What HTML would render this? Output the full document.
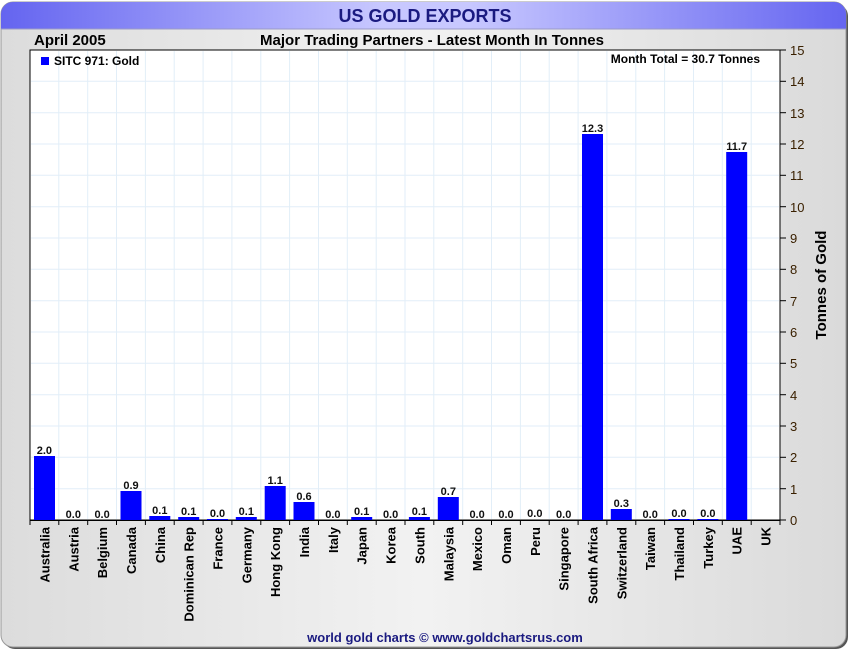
<!DOCTYPE html>
<html><head><style>
html,body{margin:0;padding:0;background:#fff;}
svg{display:block;font-family:"Liberation Sans",Arial,sans-serif;}
</style></head><body>
<svg width="850" height="650" xmlns="http://www.w3.org/2000/svg">
<defs>
<linearGradient id="tb" x1="0" x2="1" y1="0" y2="0">
<stop offset="0" stop-color="#6464f0"/><stop offset="0.45" stop-color="#c8c8ff"/><stop offset="0.55" stop-color="#c8c8ff"/><stop offset="1" stop-color="#6464f0"/>
</linearGradient>
<linearGradient id="bg" x1="0" x2="1" y1="0" y2="0">
<stop offset="0" stop-color="#dcdcdc"/><stop offset="0.5" stop-color="#f2f2f2"/><stop offset="1" stop-color="#dadada"/>
</linearGradient>
<clipPath id="cl"><rect x="1" y="2" width="845" height="645" rx="12"/></clipPath>
</defs>
<rect x="3" y="4" width="845" height="645" rx="12" fill="#555"/>
<rect x="1" y="2" width="845" height="645" rx="12" fill="url(#bg)" stroke="#999" stroke-width="1"/>
<g clip-path="url(#cl)"><rect x="0" y="0" width="850" height="29" fill="url(#tb)"/><line x1="0" y1="29" x2="850" y2="29" stroke="#9a9ac8"/></g>
<text x="425" y="22" text-anchor="middle" font-size="18" font-weight="bold" fill="#1a1a80">US GOLD EXPORTS</text>
<text x="34" y="45" font-size="15" font-weight="bold" fill="#000">April 2005</text>
<text x="432" y="45" text-anchor="middle" font-size="15" font-weight="bold" fill="#000">Major Trading Partners - Latest Month In Tonnes</text>
<rect x="30" y="50" width="750" height="470" fill="#fff" stroke="#000" stroke-width="1"/>
<g stroke="#e2eef8" stroke-width="1">
<line x1="31" y1="81.3" x2="779" y2="81.3"/><line x1="31" y1="112.7" x2="779" y2="112.7"/><line x1="31" y1="144" x2="779" y2="144"/><line x1="31" y1="175.3" x2="779" y2="175.3"/><line x1="31" y1="206.7" x2="779" y2="206.7"/><line x1="31" y1="238" x2="779" y2="238"/><line x1="31" y1="269.3" x2="779" y2="269.3"/><line x1="31" y1="300.7" x2="779" y2="300.7"/><line x1="31" y1="332" x2="779" y2="332"/><line x1="31" y1="363.3" x2="779" y2="363.3"/><line x1="31" y1="394.7" x2="779" y2="394.7"/><line x1="31" y1="426" x2="779" y2="426"/><line x1="31" y1="457.3" x2="779" y2="457.3"/><line x1="31" y1="488.7" x2="779" y2="488.7"/>
<line x1="58.8" y1="51" x2="58.8" y2="519"/><line x1="87.7" y1="51" x2="87.7" y2="519"/><line x1="116.5" y1="51" x2="116.5" y2="519"/><line x1="145.4" y1="51" x2="145.4" y2="519"/><line x1="174.2" y1="51" x2="174.2" y2="519"/><line x1="203.1" y1="51" x2="203.1" y2="519"/><line x1="231.9" y1="51" x2="231.9" y2="519"/><line x1="260.8" y1="51" x2="260.8" y2="519"/><line x1="289.6" y1="51" x2="289.6" y2="519"/><line x1="318.5" y1="51" x2="318.5" y2="519"/><line x1="347.3" y1="51" x2="347.3" y2="519"/><line x1="376.2" y1="51" x2="376.2" y2="519"/><line x1="405" y1="51" x2="405" y2="519"/><line x1="433.8" y1="51" x2="433.8" y2="519"/><line x1="462.7" y1="51" x2="462.7" y2="519"/><line x1="491.5" y1="51" x2="491.5" y2="519"/><line x1="520.4" y1="51" x2="520.4" y2="519"/><line x1="549.2" y1="51" x2="549.2" y2="519"/><line x1="578.1" y1="51" x2="578.1" y2="519"/><line x1="606.9" y1="51" x2="606.9" y2="519"/><line x1="635.8" y1="51" x2="635.8" y2="519"/><line x1="664.6" y1="51" x2="664.6" y2="519"/><line x1="693.5" y1="51" x2="693.5" y2="519"/><line x1="722.3" y1="51" x2="722.3" y2="519"/><line x1="751.2" y1="51" x2="751.2" y2="519"/>
</g>
<rect x="41" y="57" width="8" height="8" fill="#0000ff"/>
<text x="54" y="65" font-size="12" font-weight="bold" fill="#000">SITC 971: Gold</text>
<text x="760" y="63" text-anchor="end" font-size="12" font-weight="bold" fill="#000">Month Total = 30.7 Tonnes</text>
<g fill="#0000ff">
<rect x="34" y="456" width="21" height="64"/>
<rect x="120.5" y="491" width="21" height="29"/>
<rect x="149.3" y="516" width="21" height="4"/>
<rect x="178.2" y="517" width="21" height="3"/>
<rect x="207" y="519" width="21" height="1"/>
<rect x="235.8" y="517" width="21" height="3"/>
<rect x="264.7" y="486" width="21" height="34"/>
<rect x="293.5" y="502" width="21" height="18"/>
<rect x="351.2" y="517" width="21" height="3"/>
<rect x="408.9" y="517" width="21" height="3"/>
<rect x="437.8" y="497" width="21" height="23"/>
<rect x="582" y="134" width="21" height="386"/>
<rect x="610.8" y="509" width="21" height="11"/>
<rect x="668.5" y="519" width="21" height="1"/>
<rect x="697.4" y="519" width="21" height="1"/>
<rect x="726.2" y="152" width="21" height="368"/>
</g>
<g font-size="11" font-weight="bold" fill="#111" text-anchor="middle">
<text x="44.4" y="454">2.0</text><text x="73.3" y="518">0.0</text><text x="102.1" y="518">0.0</text><text x="131" y="489">0.9</text><text x="159.8" y="514">0.1</text><text x="188.7" y="515">0.1</text><text x="217.5" y="517">0.0</text><text x="246.3" y="515">0.1</text><text x="275.2" y="484">1.1</text><text x="304" y="500">0.6</text><text x="332.9" y="518">0.0</text><text x="361.7" y="515">0.1</text><text x="390.6" y="518">0.0</text><text x="419.4" y="515">0.1</text><text x="448.3" y="495">0.7</text><text x="477.1" y="518">0.0</text><text x="506" y="518">0.0</text><text x="534.8" y="517">0.0</text><text x="563.7" y="518">0.0</text><text x="592.5" y="132">12.3</text><text x="621.3" y="507">0.3</text><text x="650.2" y="518">0.0</text><text x="679" y="517">0.0</text><text x="707.9" y="517">0.0</text><text x="736.7" y="150">11.7</text>
</g>
<g stroke="#000" stroke-width="1">
<line x1="780" y1="50" x2="780" y2="521"/><line x1="30" y1="520.5" x2="780" y2="520.5"/>
<line x1="780" y1="50" x2="786" y2="50"/><line x1="780" y1="81.3" x2="786" y2="81.3"/><line x1="780" y1="112.7" x2="786" y2="112.7"/><line x1="780" y1="144" x2="786" y2="144"/><line x1="780" y1="175.3" x2="786" y2="175.3"/><line x1="780" y1="206.7" x2="786" y2="206.7"/><line x1="780" y1="238" x2="786" y2="238"/><line x1="780" y1="269.3" x2="786" y2="269.3"/><line x1="780" y1="300.7" x2="786" y2="300.7"/><line x1="780" y1="332" x2="786" y2="332"/><line x1="780" y1="363.3" x2="786" y2="363.3"/><line x1="780" y1="394.7" x2="786" y2="394.7"/><line x1="780" y1="426" x2="786" y2="426"/><line x1="780" y1="457.3" x2="786" y2="457.3"/><line x1="780" y1="488.7" x2="786" y2="488.7"/><line x1="780" y1="520" x2="786" y2="520"/>
<line x1="30" y1="520" x2="30" y2="525"/><line x1="58.8" y1="520" x2="58.8" y2="525"/><line x1="87.7" y1="520" x2="87.7" y2="525"/><line x1="116.5" y1="520" x2="116.5" y2="525"/><line x1="145.4" y1="520" x2="145.4" y2="525"/><line x1="174.2" y1="520" x2="174.2" y2="525"/><line x1="203.1" y1="520" x2="203.1" y2="525"/><line x1="231.9" y1="520" x2="231.9" y2="525"/><line x1="260.8" y1="520" x2="260.8" y2="525"/><line x1="289.6" y1="520" x2="289.6" y2="525"/><line x1="318.5" y1="520" x2="318.5" y2="525"/><line x1="347.3" y1="520" x2="347.3" y2="525"/><line x1="376.2" y1="520" x2="376.2" y2="525"/><line x1="405" y1="520" x2="405" y2="525"/><line x1="433.8" y1="520" x2="433.8" y2="525"/><line x1="462.7" y1="520" x2="462.7" y2="525"/><line x1="491.5" y1="520" x2="491.5" y2="525"/><line x1="520.4" y1="520" x2="520.4" y2="525"/><line x1="549.2" y1="520" x2="549.2" y2="525"/><line x1="578.1" y1="520" x2="578.1" y2="525"/><line x1="606.9" y1="520" x2="606.9" y2="525"/><line x1="635.8" y1="520" x2="635.8" y2="525"/><line x1="664.6" y1="520" x2="664.6" y2="525"/><line x1="693.5" y1="520" x2="693.5" y2="525"/><line x1="722.3" y1="520" x2="722.3" y2="525"/><line x1="751.2" y1="520" x2="751.2" y2="525"/><line x1="780" y1="520" x2="780" y2="525"/>
</g>
<g font-size="13" fill="#3a2000">
<text x="790" y="55">15</text><text x="790" y="86">14</text><text x="790" y="118">13</text><text x="790" y="149">12</text><text x="790" y="180">11</text><text x="790" y="212">10</text><text x="790" y="243">9</text><text x="790" y="274">8</text><text x="790" y="306">7</text><text x="790" y="337">6</text><text x="790" y="368">5</text><text x="790" y="400">4</text><text x="790" y="431">3</text><text x="790" y="462">2</text><text x="790" y="494">1</text><text x="790" y="525">0</text>
</g>
<text transform="translate(826,285) rotate(-90)" text-anchor="middle" font-size="15" font-weight="bold" fill="#000">Tonnes of Gold</text>
<g font-size="13" font-weight="bold" fill="#000" text-anchor="end">
<text transform="translate(49.4,527) rotate(-90)">Australia</text>
<text transform="translate(78.3,527) rotate(-90)">Austria</text>
<text transform="translate(107.1,527) rotate(-90)">Belgium</text>
<text transform="translate(136,527) rotate(-90)">Canada</text>
<text transform="translate(164.8,527) rotate(-90)">China</text>
<text transform="translate(193.7,527) rotate(-90)">Dominican Rep</text>
<text transform="translate(222.5,527) rotate(-90)">France</text>
<text transform="translate(251.3,527) rotate(-90)">Germany</text>
<text transform="translate(280.2,527) rotate(-90)">Hong Kong</text>
<text transform="translate(309,527) rotate(-90)">India</text>
<text transform="translate(337.9,527) rotate(-90)">Italy</text>
<text transform="translate(366.7,527) rotate(-90)">Japan</text>
<text transform="translate(395.6,527) rotate(-90)">Korea</text>
<text transform="translate(424.4,527) rotate(-90)">South</text>
<text transform="translate(453.3,527) rotate(-90)">Malaysia</text>
<text transform="translate(482.1,527) rotate(-90)">Mexico</text>
<text transform="translate(511,527) rotate(-90)">Oman</text>
<text transform="translate(539.8,527) rotate(-90)">Peru</text>
<text transform="translate(568.7,527) rotate(-90)">Singapore</text>
<text transform="translate(597.5,527) rotate(-90)">South Africa</text>
<text transform="translate(626.3,527) rotate(-90)">Switzerland</text>
<text transform="translate(655.2,527) rotate(-90)">Taiwan</text>
<text transform="translate(684,527) rotate(-90)">Thailand</text>
<text transform="translate(712.9,527) rotate(-90)">Turkey</text>
<text transform="translate(741.7,527) rotate(-90)">UAE</text>
<text transform="translate(770.6,527) rotate(-90)">UK</text>
</g>
<text x="445" y="642" text-anchor="middle" font-size="13" font-weight="bold" fill="#1a1a80">world gold charts © www.goldchartsrus.com</text>
</svg>
</body></html>
